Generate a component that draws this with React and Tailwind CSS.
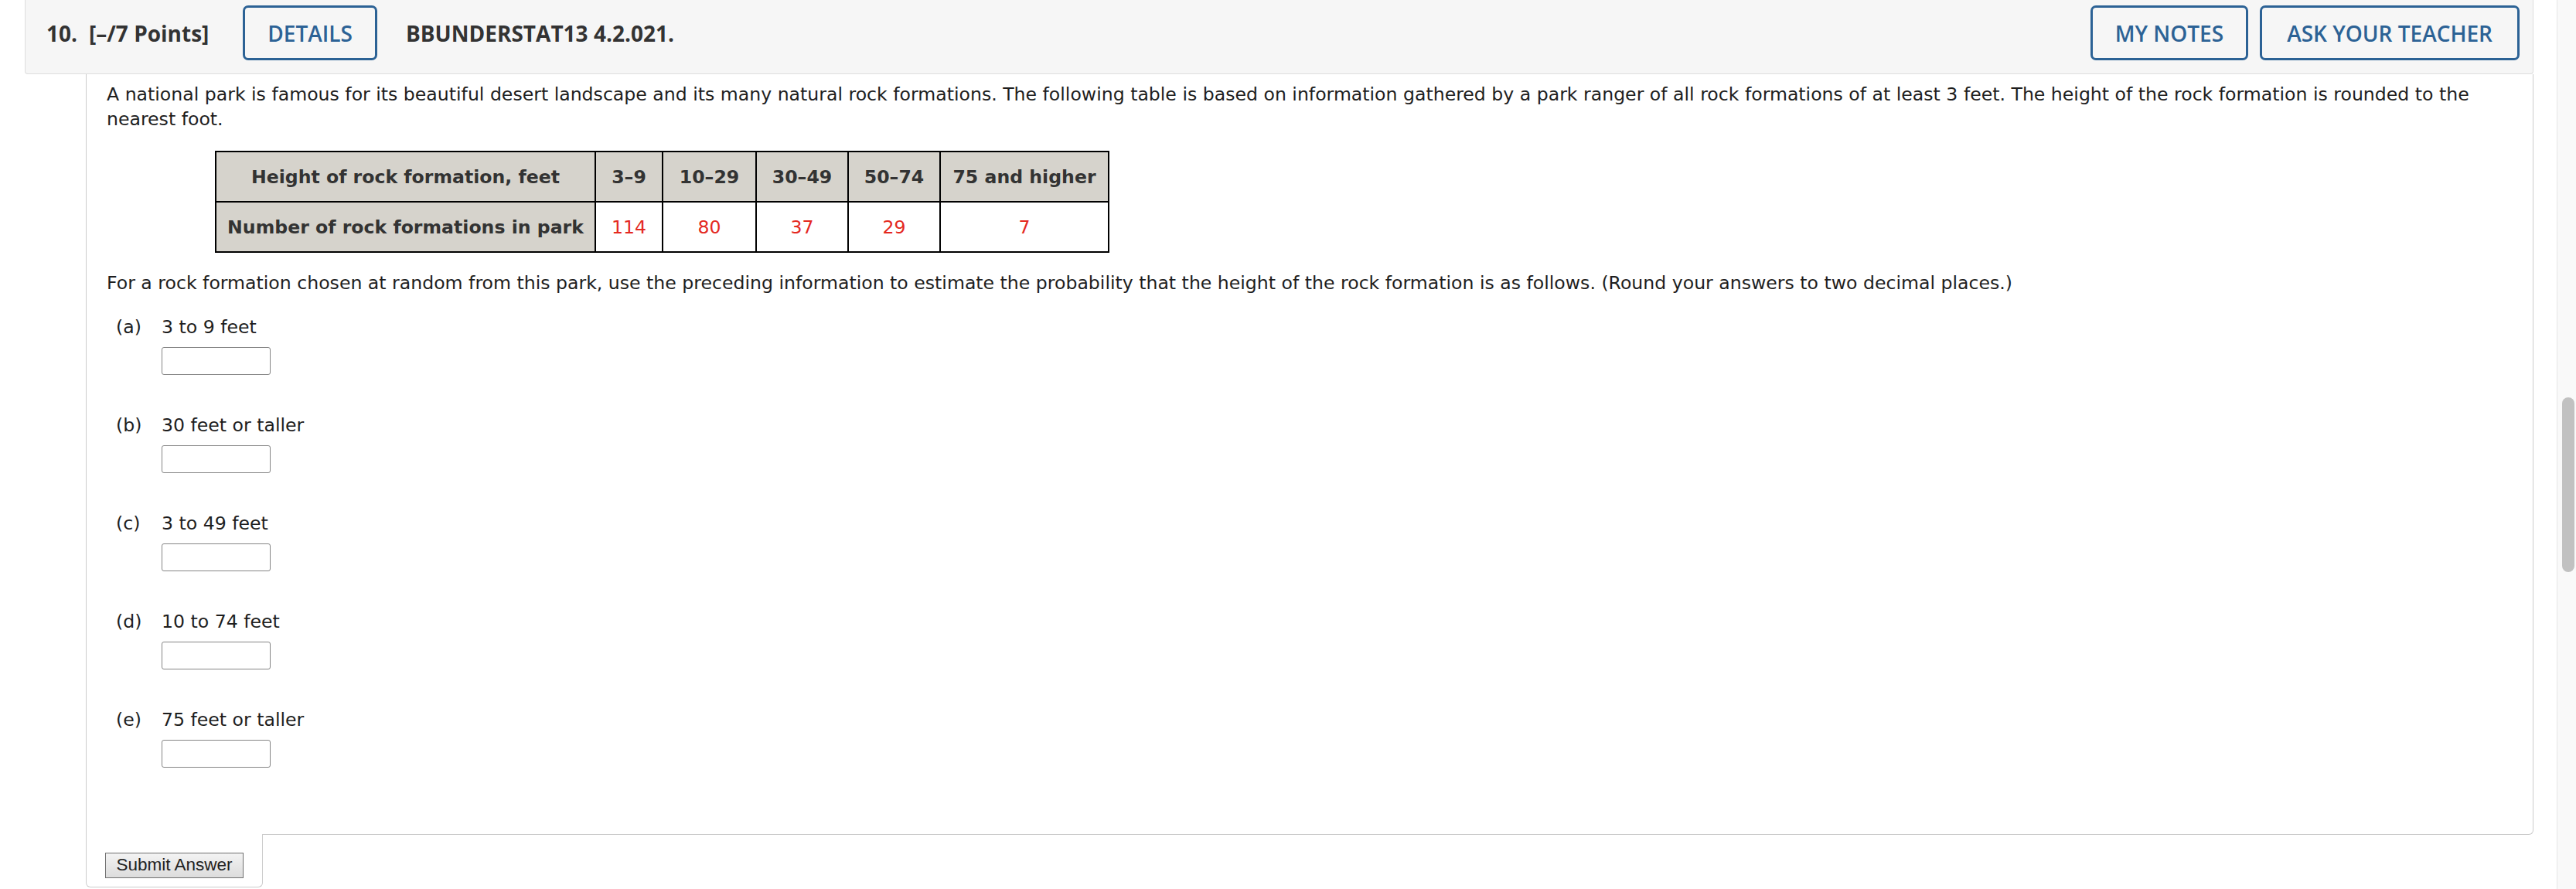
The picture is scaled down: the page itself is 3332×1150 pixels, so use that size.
import React from "react";

const parts = [
  ["(a)", "3 to 9 feet"],
  ["(b)", "30 feet or taller"],
  ["(c)", "3 to 49 feet"],
  ["(d)", "10 to 74 feet"],
  ["(e)", "75 feet or taller"],
];

const cols = [
  ["3\u20139", "114"],
  ["10\u201329", "80"],
  ["30\u201349", "37"],
  ["50\u201374", "29"],
  ["75 and higher", "7"],
];
const widths = ["w-[87px]", "w-[121px]", "w-[119px]", "w-[119px]", "w-[218px]"];

function OutlineButton({ children, className = "" }) {
  return (
    <button
      className={
        "h-[71px] border-[3px] border-[#2c6295] rounded-[7px] text-[#2c6295] font-semibold bg-transparent " +
        className
      }
    >
      {children}
    </button>
  );
}

export default function App() {
  return (
    <div className="flex h-[1150px] overflow-hidden bg-white">
      <div className="flex-1 min-w-0">
        {/* Header */}
        <div className="ml-[32px] mr-[30px] bg-[#f6f6f6] border-x border-b border-[#dddddd] rounded-b-[4px] pt-[7px] pb-[17px] pl-[27px] pr-[17px] flex items-center font-['Open_Sans',sans-serif] text-[28px] leading-none">
          <span className="font-bold text-[#333333]">10.</span>
          <span className="ml-[15px] font-bold text-[#333333]">[–/7 Points]</span>
          <OutlineButton className="ml-[44px] px-[29px]">DETAILS</OutlineButton>
          <span className="ml-[37px] font-bold text-[#333333]">BBUNDERSTAT13 4.2.021.</span>
          <div className="ml-auto flex gap-[15px]">
            <OutlineButton className="px-[29px]">MY NOTES</OutlineButton>
            <OutlineButton className="px-[32px]">ASK YOUR TEACHER</OutlineButton>
          </div>
        </div>

        {/* Question panel */}
        <div className="ml-[111px] mr-[30px] border-x border-b border-[#cccccc] rounded-br-[6px] pl-[26px] pr-[26px] pt-[10px] pb-[86px] font-['DejaVu_Sans',Verdana,sans-serif] text-[23.6px] leading-[32px] text-[#1e1e1e]">
          <p>
            A national park is famous for its beautiful desert landscape and its many natural rock formations. The following table is based on information gathered by a park ranger of all rock formations of at least 3 feet. The height of the rock formation is rounded to the nearest foot.
          </p>

          <table className="ml-[140px] mt-[25px] border-collapse table-fixed w-[1155px]">
            <tbody>
              <tr className="h-[65px]">
                <th className="w-[491px] border-2 border-black bg-[#d6d3cc] font-bold text-[#333333] text-center">
                  Height of rock formation, feet
                </th>
                {cols.map(([h], i) => (
                  <th
                    key={h}
                    className={widths[i] + " border-2 border-black bg-[#d6d3cc] font-bold text-[#333333] text-center whitespace-nowrap"}
                  >
                    {h}
                  </th>
                ))}
              </tr>
              <tr className="h-[65px]">
                <th className="border-2 border-black bg-[#d6d3cc] font-bold text-[#333333] text-center whitespace-nowrap">
                  Number of rock formations in park
                </th>
                {cols.map(([h, v]) => (
                  <td key={h} className="border-2 border-black bg-white text-center text-[#e4291f]">
                    {v}
                  </td>
                ))}
              </tr>
            </tbody>
          </table>

          <p className="mt-[23px]">
            For a rock formation chosen at random from this park, use the preceding information to estimate the probability that the height of the rock formation is as follows. (Round your answers to two decimal places.)
          </p>

          <div className="mt-[25px] flex flex-col gap-[49px]">
            {parts.map(([l, t]) => (
              <div key={l}>
                <div className="flex">
                  <span className="ml-[12px] w-[59px]">{l}</span>
                  <span>{t}</span>
                </div>
                <div className="ml-[71px] mt-[10px] w-[141px] h-[36px] border border-[#858585] rounded-[3px] bg-white" />
              </div>
            ))}
          </div>
        </div>

        {/* Submit tab */}
        <div className="ml-[111px] -mt-px w-[229px] h-[69px] bg-white border-x border-b border-[#cccccc] rounded-b-[6px] pt-[24px] pl-[24px]">
          <button className="h-[33px] w-[179px] border border-[#707070] bg-linear-to-b from-[#f3f3f3] to-[#dcdcdc] font-['Liberation_Sans',Arial,sans-serif] text-[22.5px] leading-none text-[#222222]">
            Submit Answer
          </button>
        </div>
      </div>

      {/* Scrollbar */}
      <div className="w-[25px] shrink-0 h-[1150px] bg-[#f9f9f9] border-l border-[#e6e6e6]">
        <div className="ml-[6px] mt-[514px] w-[16px] h-[226px] rounded-full bg-[#c1c1c1]" />
      </div>
    </div>
  );
}
